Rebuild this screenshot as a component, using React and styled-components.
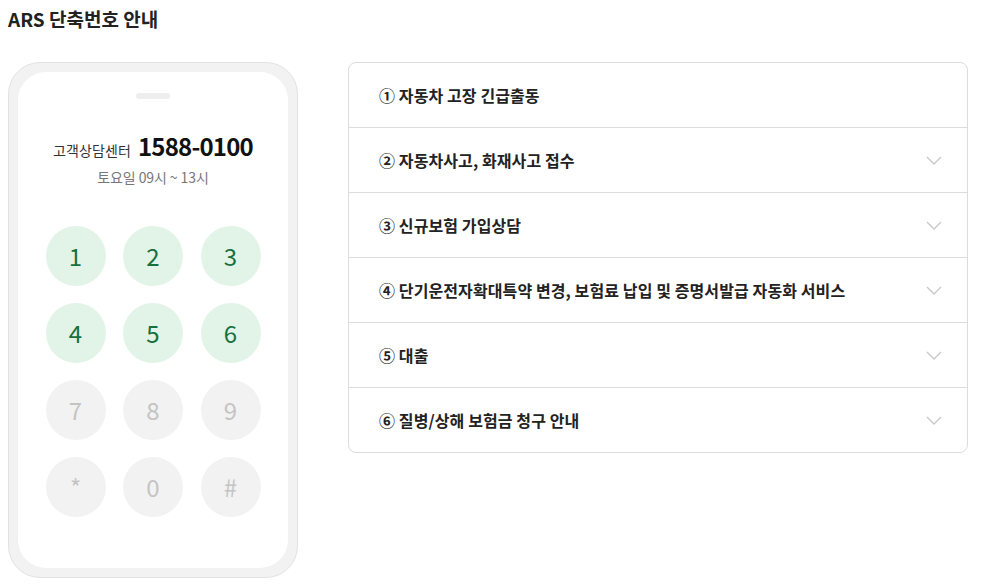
import React from "react";
import styled, { createGlobalStyle } from "styled-components";

const Global = createGlobalStyle`
  html, body { margin: 0; padding: 0; background: #fff; }
  body { font-family: "Noto Sans CJK KR", "Noto Sans", sans-serif; color: #222; }
  * { box-sizing: border-box; }
`;

const Page = styled.div`
  padding: 6px 8px 0 8px;
  width: 981px;
`;

const Title = styled.h2`
  margin: 0;
  font-size: 19px;
  font-weight: 700;
  line-height: 26px;
  color: #222;
  letter-spacing: 0;
`;

const Content = styled.div`
  display: flex;
  gap: 50px;
  margin-top: 30px;
  align-items: flex-start;
`;

const PhoneOuter = styled.div`
  width: 290px;
  height: 516px;
  padding: 9px;
  background: #f2f2f2;
  border: 1px solid #e2e2e2;
  border-radius: 32px;
  flex: none;
`;

const PhoneInner = styled.div`
  height: 100%;
  background: #fff;
  border-radius: 28px;
  display: flex;
  flex-direction: column;
  align-items: center;
  padding-top: 21px;
`;

const Notch = styled.div`
  width: 34px;
  height: 6px;
  border-radius: 3px;
  background: #eeeeee;
`;

const CenterLine = styled.div`
  margin-top: 32px;
  display: flex;
  align-items: baseline;
  gap: 7px;
  line-height: 30px;
`;

const CenterLabel = styled.span`
  font-size: 14px;
  color: #333;
  letter-spacing: 0.1px;
`;

const CenterNumber = styled.span`
  font-size: 24px;
  font-weight: 700;
  color: #111;
  letter-spacing: -0.8px;
`;

const Hours = styled.div`
  font-size: 14px;
  line-height: 20px;
  color: #777;
  letter-spacing: -0.1px;
  margin-top: 2px;
`;

const Keypad = styled.div`
  margin-top: 39px;
  display: grid;
  grid-template-columns: repeat(3, 60px);
  column-gap: 17.5px;
  row-gap: 17px;
`;

const Key = styled.div`
  width: 60px;
  height: 60px;
  border-radius: 50%;
  display: flex;
  align-items: center;
  justify-content: center;
  font-size: 24px;
  background: ${(p) => (p.$active ? "#e2f4e7" : "#f2f2f2")};
  color: ${(p) => (p.$active ? "#17703d" : "#c4c4c4")};
  padding-bottom: 1px;
`;

const Accordion = styled.div`
  width: 620px;
  border: 1px solid #dcdcdc;
  border-radius: 8px;
  overflow: hidden;
`;

const Row = styled.div`
  display: flex;
  align-items: center;
  justify-content: space-between;
  padding: 0 25px 0 30px;
  border-top: ${(p) => (p.$first ? "none" : "1px solid #dcdcdc")};
  height: ${(p) => (p.$first ? "64px" : "65px")};
`;

const RowText = styled.span`
  font-size: 16px;
  font-weight: 700;
  color: #222;
  letter-spacing: 0.1px;
`;

const Chevron = () => (
  <svg width="16" height="9" viewBox="0 0 16 9" fill="none">
    <path d="M1 1 L8 8 L15 1" stroke="#c8c8c8" strokeWidth="1.4" />
  </svg>
);

const keys = ["1", "2", "3", "4", "5", "6", "7", "8", "9", "*", "0", "#"];

const items = [
  { t: "① 자동차 고장 긴급출동", chev: false },
  { t: "② 자동차사고, 화재사고 접수", chev: true },
  { t: "③ 신규보험 가입상담", chev: true },
  { t: "④ 단기운전자확대특약 변경, 보험료 납입 및 증명서발급 자동화 서비스", chev: true },
  { t: "⑤ 대출", chev: true },
  { t: "⑥ 질병/상해 보험금 청구 안내", chev: true },
];

export default function App() {
  return (
    <>
      <Global />
      <Page>
        <Title>ARS 단축번호 안내</Title>
        <Content>
          <PhoneOuter>
            <PhoneInner>
              <Notch />
              <CenterLine>
                <CenterLabel>고객상담센터</CenterLabel>
                <CenterNumber>1588-0100</CenterNumber>
              </CenterLine>
              <Hours>토요일 09시 ~ 13시</Hours>
              <Keypad>
                {keys.map((k, i) => (
                  <Key key={k} $active={i < 6}>
                    {k}
                  </Key>
                ))}
              </Keypad>
            </PhoneInner>
          </PhoneOuter>
          <Accordion>
            {items.map((it, i) => (
              <Row key={i} $first={i === 0}>
                <RowText>{it.t}</RowText>
                {it.chev && <Chevron />}
              </Row>
            ))}
          </Accordion>
        </Content>
      </Page>
    </>
  );
}
